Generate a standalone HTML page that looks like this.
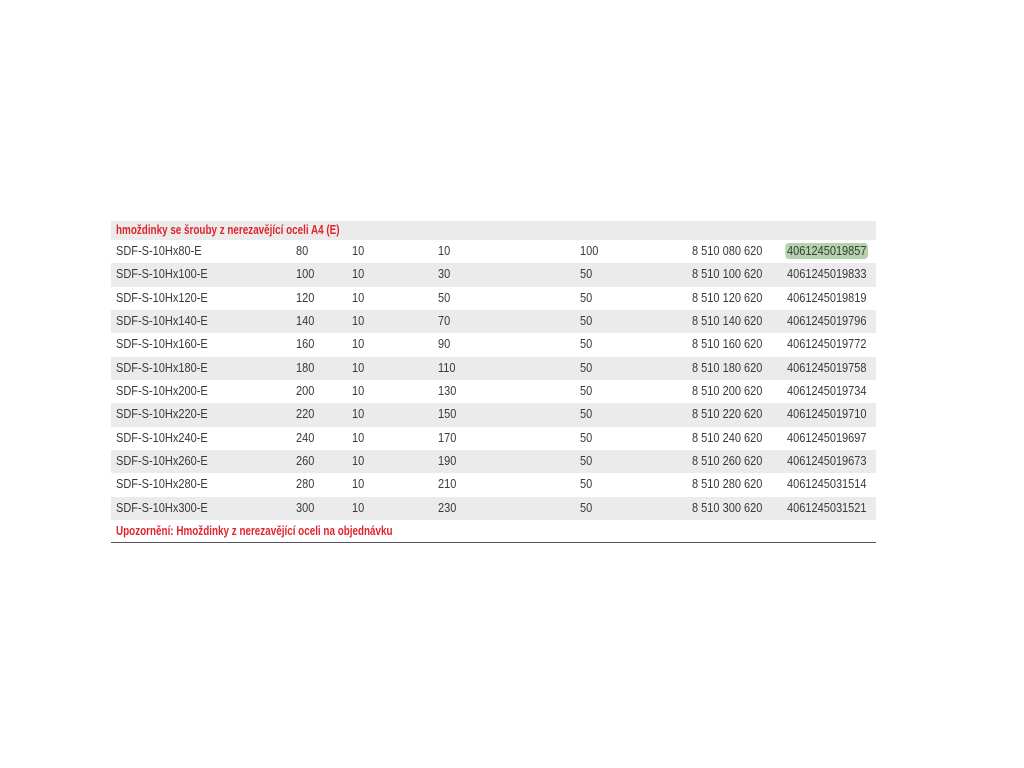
<!DOCTYPE html>
<html><head><meta charset="utf-8"><style>
body{margin:0;width:1024px;height:768px;background:#fff;position:relative;font-family:"Liberation Sans",sans-serif;font-size:12.5px;color:#3a3a3a}
.r{position:absolute;left:111px;width:765px;height:23.33px}
.g{background:#ebebeb}
.c{position:absolute;top:4px;white-space:nowrap;transform:scaleX(0.88);transform-origin:left center}
.red{color:#e0242b;font-weight:bold;transform:scaleX(0.79)}
.hl{background:#b3d3ad;border-radius:4px;padding:1px 2px;margin-left:-2px}
</style></head><body>
<div class="r g" style="top:221px;height:19px"><span class="c red" style="left:5px;top:2px">hmoždinky se šrouby z nerezavějící oceli A4 (E)</span></div>
<div id="rows"></div>
<div style="position:absolute;left:111px;top:520px;width:765px;height:22px;border-bottom:1px solid #555"><span class="c red" style="left:5px;top:4px">Upozornění: Hmoždinky z nerezavějící oceli na objednávku</span></div>
<script>
var d=[["SDF-S-10Hx80-E",80,10,10,100,"8 510 080 620","4061245019857"],
["SDF-S-10Hx100-E",100,10,30,50,"8 510 100 620","4061245019833"],
["SDF-S-10Hx120-E",120,10,50,50,"8 510 120 620","4061245019819"],
["SDF-S-10Hx140-E",140,10,70,50,"8 510 140 620","4061245019796"],
["SDF-S-10Hx160-E",160,10,90,50,"8 510 160 620","4061245019772"],
["SDF-S-10Hx180-E",180,10,110,50,"8 510 180 620","4061245019758"],
["SDF-S-10Hx200-E",200,10,130,50,"8 510 200 620","4061245019734"],
["SDF-S-10Hx220-E",220,10,150,50,"8 510 220 620","4061245019710"],
["SDF-S-10Hx240-E",240,10,170,50,"8 510 240 620","4061245019697"],
["SDF-S-10Hx260-E",260,10,190,50,"8 510 260 620","4061245019673"],
["SDF-S-10Hx280-E",280,10,210,50,"8 510 280 620","4061245031514"],
["SDF-S-10Hx300-E",300,10,230,50,"8 510 300 620","4061245031521"]];
var xs=[5,185,241,327,469,581,676],h="";
d.forEach(function(r,i){h+='<div class="r'+(i%2?' g':'')+'" style="top:'+(240+i*23.33)+'px">';
r.forEach(function(v,j){h+='<span class="c" style="left:'+xs[j]+'px">'+(i==0&&j==6?'<span class="hl">'+v+'</span>':v)+'</span>';});h+='</div>';});
document.getElementById('rows').outerHTML=h;
</script>
</body></html>
